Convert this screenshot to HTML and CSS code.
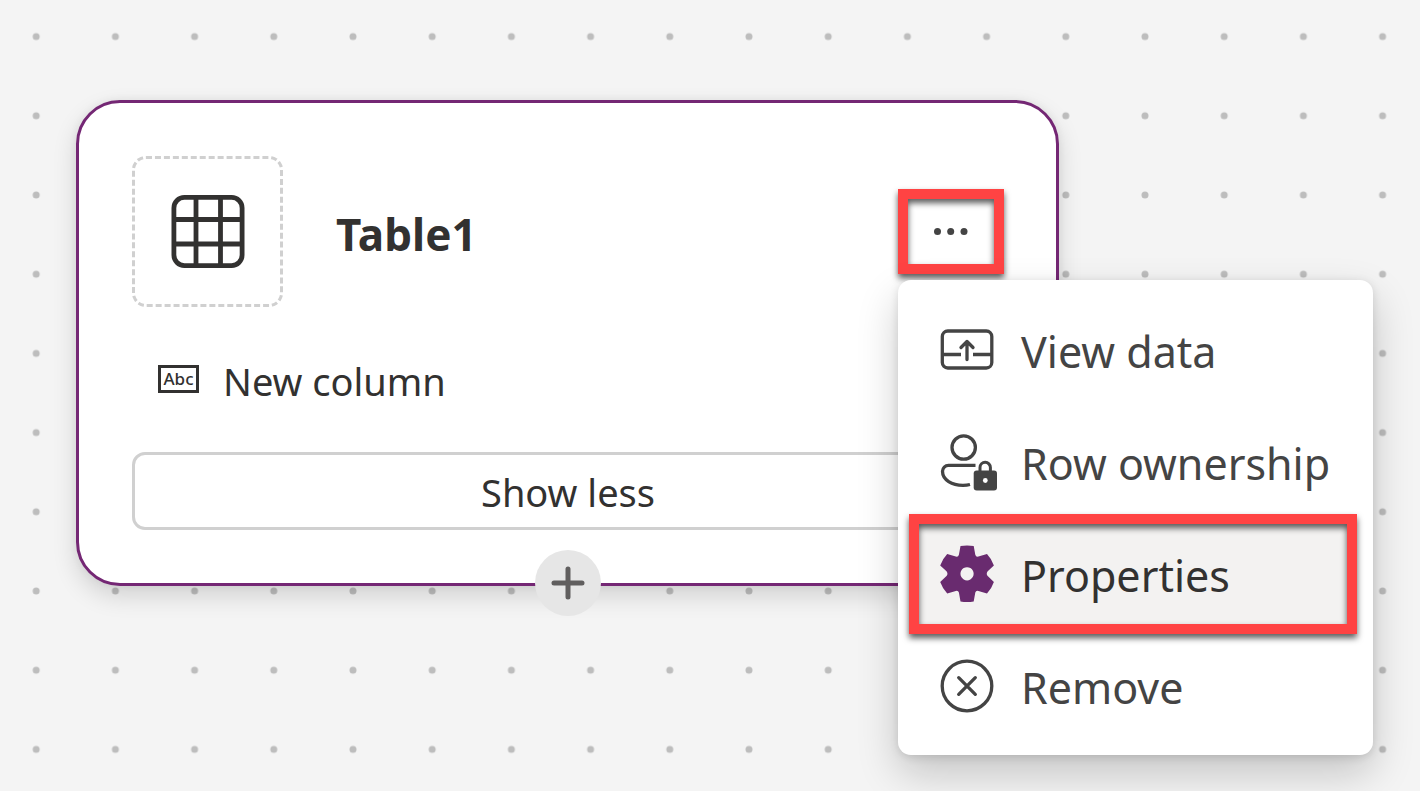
FILE: index.html
```html
<!DOCTYPE html>
<html lang="en">
<head>
<meta charset="utf-8">
<title>Table1</title>
<link rel="stylesheet" href="styles.css">
</head>
<body>
<main class="canvas">
  <svg class="grid" aria-hidden="true">
    <defs>
      <pattern id="dots" x="-3.4" y="-3" width="79.2" height="79.2" patternUnits="userSpaceOnUse">
        <circle cx="39.6" cy="39.6" r="3.5" fill="#bdbdbd"/>
      </pattern>
    </defs>
    <rect width="100%" height="100%" fill="url(#dots)"/>
  </svg>

  <article class="card">
    <header class="card-header">
      <div class="tile">
        <svg width="74" height="74" viewBox="0 0 74 74" fill="none" stroke="#323130" stroke-width="4.8" aria-hidden="true">
          <rect x="2.9" y="2.4" width="68.2" height="68.2" rx="10.5"/>
          <path d="M25 3v68M49.500 3v68M3 24.500h68M3 49h68"/>
        </svg>
      </div>
      <h1 class="title">Table1</h1>
      <div class="more-wrap">
        <button class="more marked" type="button" aria-label="More actions" aria-expanded="true">
          <svg width="36" height="8" viewBox="0 0 36 8" fill="#444" aria-hidden="true">
            <circle cx="4.500" cy="3.500" r="3.500"/><circle cx="17.700" cy="3.500" r="3.500"/><circle cx="31" cy="3.500" r="3.500"/>
          </svg>
        </button>
        <div class="menu" role="menu">
          <button class="item" type="button" role="menuitem">
            <svg class="icon" viewBox="0 0 58 58" fill="none" stroke="#444" stroke-width="3.300" aria-hidden="true">
              <rect x="3.300" y="10" width="49.500" height="37" rx="5.500"/>
              <path d="M3.300 33.500h18.700M34 33.500h18.700"/>
              <path d="M28 38.500V20.500M22 26.500l6-6 6 6" stroke-linecap="round" stroke-linejoin="round"/>
            </svg>
            <span class="label">View data</span>
          </button>
          <button class="item" type="button" role="menuitem">
            <svg class="icon" viewBox="0 0 58 58" fill="none" stroke="#444" stroke-width="3.300" aria-hidden="true">
              <circle cx="24.700" cy="14.500" r="11.700"/>
              <path d="M36.500 32.300H9.500a6 6 0 0 0-6 6C3.500 47 13 52.300 24 52.300q4 0 7-.8"/>
              <path d="M41 38.500v-4a5.200 5.200 0 0 1 10.400 0V38.500" stroke-width="3"/>
              <rect x="34.700" y="37.500" width="23.300" height="20" rx="3" fill="#444" stroke="none"/>
              <circle cx="46.300" cy="47.500" r="2.400" fill="#fff" stroke="none"/>
            </svg>
            <span class="label">Row ownership</span>
          </button>
          <button class="item active marked" type="button" role="menuitem">
            <svg class="icon" viewBox="0 0 58 58" aria-hidden="true">
              <path fill="#692b6f" fill-rule="evenodd" d="M21.500 1.100Q28 0 34.700 1.100L36.300 9.800Q37 12.200 39.400 11.500L48 9Q52.600 13.800 54.900 20.500L48.700 26.300Q46.800 29 48.700 31L54.900 36.900Q52.600 43.500 48 48.400L39.400 45.900Q37 45.200 36.300 47.600L34.700 56.500Q28 57.600 21.500 56.500L19.900 47.600Q19.200 45.200 16.800 45.900L8.200 48.400Q3.600 43.500 1.200 36.900L7.500 31Q9.400 29 7.500 26.300L1.200 20.500Q3.600 13.800 8.200 9L16.800 11.500Q19.200 12.200 19.900 9.800ZM28 22.200a6.600 6.600 0 1 0 .1 0Z"/>
            </svg>
            <span class="label">Properties</span>
          </button>
          <button class="item" type="button" role="menuitem">
            <svg class="icon" viewBox="0 0 58 58" fill="none" stroke="#444" stroke-width="3.300" aria-hidden="true">
              <circle cx="28" cy="29" r="24.800"/>
              <path d="M19.700 20.700l16.600 16.600M36.300 20.700L19.700 37.300" stroke-linecap="round"/>
            </svg>
            <span class="label">Remove</span>
          </button>
        </div>
      </div>
    </header>

    <div class="column">
      <span class="type">Abc</span>
      <span class="label">New column</span>
    </div>

    <button class="toggle" type="button">Show less</button>

    <button class="add" type="button" aria-label="Add">
      <svg width="34" height="34" viewBox="0 0 34 34" fill="none" stroke="#605e5e" stroke-width="5" stroke-linecap="round" aria-hidden="true">
        <path d="M17 3v28M3 17h28"/>
      </svg>
    </button>
  </article>
</main>
</body>
</html>
```
FILE: styles.css
```css
* {
  box-sizing: border-box;
}

body {
  margin: 0;
  font-family: "Noto Sans", "Open Sans", sans-serif;
  color: #323130;
}

button {
  margin: 0;
  padding: 0;
  border: 0;
  background: none;
  font: inherit;
  color: inherit;
  cursor: pointer;
}

svg {
  display: block;
}

.canvas {
  position: relative;
  min-height: 100vh;
  overflow: hidden;
  background: #f4f4f4;
}

.grid {
  position: absolute;
  inset: 0;
  width: 100%;
  height: 100%;
}

.card {
  position: absolute;
  left: 76px;
  top: 100px;
  width: 983px;
  padding: 53px 52px 53px 53px;
  border: 3px solid #742774;
  border-radius: 44px;
  background: #fff;
  box-shadow: 0 10px 24px rgba(0, 0, 0, 0.14), 0 0 8px rgba(0, 0, 0, 0.06);
}

.card-header {
  display: flex;
  align-items: center;
}

.tile {
  display: grid;
  place-items: center;
  width: 151px;
  height: 151px;
  border: 3px dashed #d0d0d0;
  border-radius: 14px;
}

.title {
  flex: 1;
  margin: 0 0 0 53px;
  padding-top: 4px;
  font-size: 44px;
  line-height: 60px;
  font-weight: 700;
}

.more-wrap {
  position: relative;
}

.more {
  display: grid;
  place-items: center;
  width: 106px;
  height: 85px;
}

.marked {
  position: relative;
}

.marked::after {
  content: "";
  position: absolute;
  inset: 0;
  border: 10px solid #ff4343;
  filter: drop-shadow(0 4px 3px rgba(0, 0, 0, 0.65));
}

.menu {
  position: absolute;
  z-index: 2;
  left: 0;
  top: 91px;
  width: 475px;
  padding: 14px 16px 13px 11px;
  border-radius: 13px;
  background: #fff;
  box-shadow: 0 18px 42px rgba(0, 0, 0, 0.2), 0 2px 10px rgba(0, 0, 0, 0.12);
}

.item {
  display: flex;
  align-items: center;
  gap: 24px;
  width: 100%;
  height: 112px;
  padding-left: 30px;
  font-size: 43px;
  line-height: 60px;
  color: #444;
  white-space: nowrap;
}

.item .label {
  padding-top: 4px;
}

.item.active {
  background: #f3f2f1;
  color: #323130;
}

.item.active::after {
  inset: -4px 0;
}

.icon {
  flex: none;
  width: 58px;
  height: 58px;
}

.column {
  display: flex;
  align-items: center;
  gap: 24px;
  margin: 45px 26px 46px;
  font-size: 38px;
  line-height: 50px;
}

.column .label {
  padding-top: 4px;
}

.type {
  width: 41px;
  border: 3px solid #323130;
  font-size: 17px;
  line-height: 22px;
  font-weight: 500;
  text-align: center;
}

.toggle {
  width: 100%;
  height: 78px;
  padding-top: 2px;
  border: 3px solid #d0d0d0;
  border-radius: 13px;
  font-size: 38px;
  line-height: 52px;
}

.add {
  position: absolute;
  left: 50%;
  bottom: 0;
  display: grid;
  place-items: center;
  width: 66px;
  height: 66px;
  border-radius: 50%;
  background: #e6e6e6;
  transform: translate(-50%, 50%);
}
```
